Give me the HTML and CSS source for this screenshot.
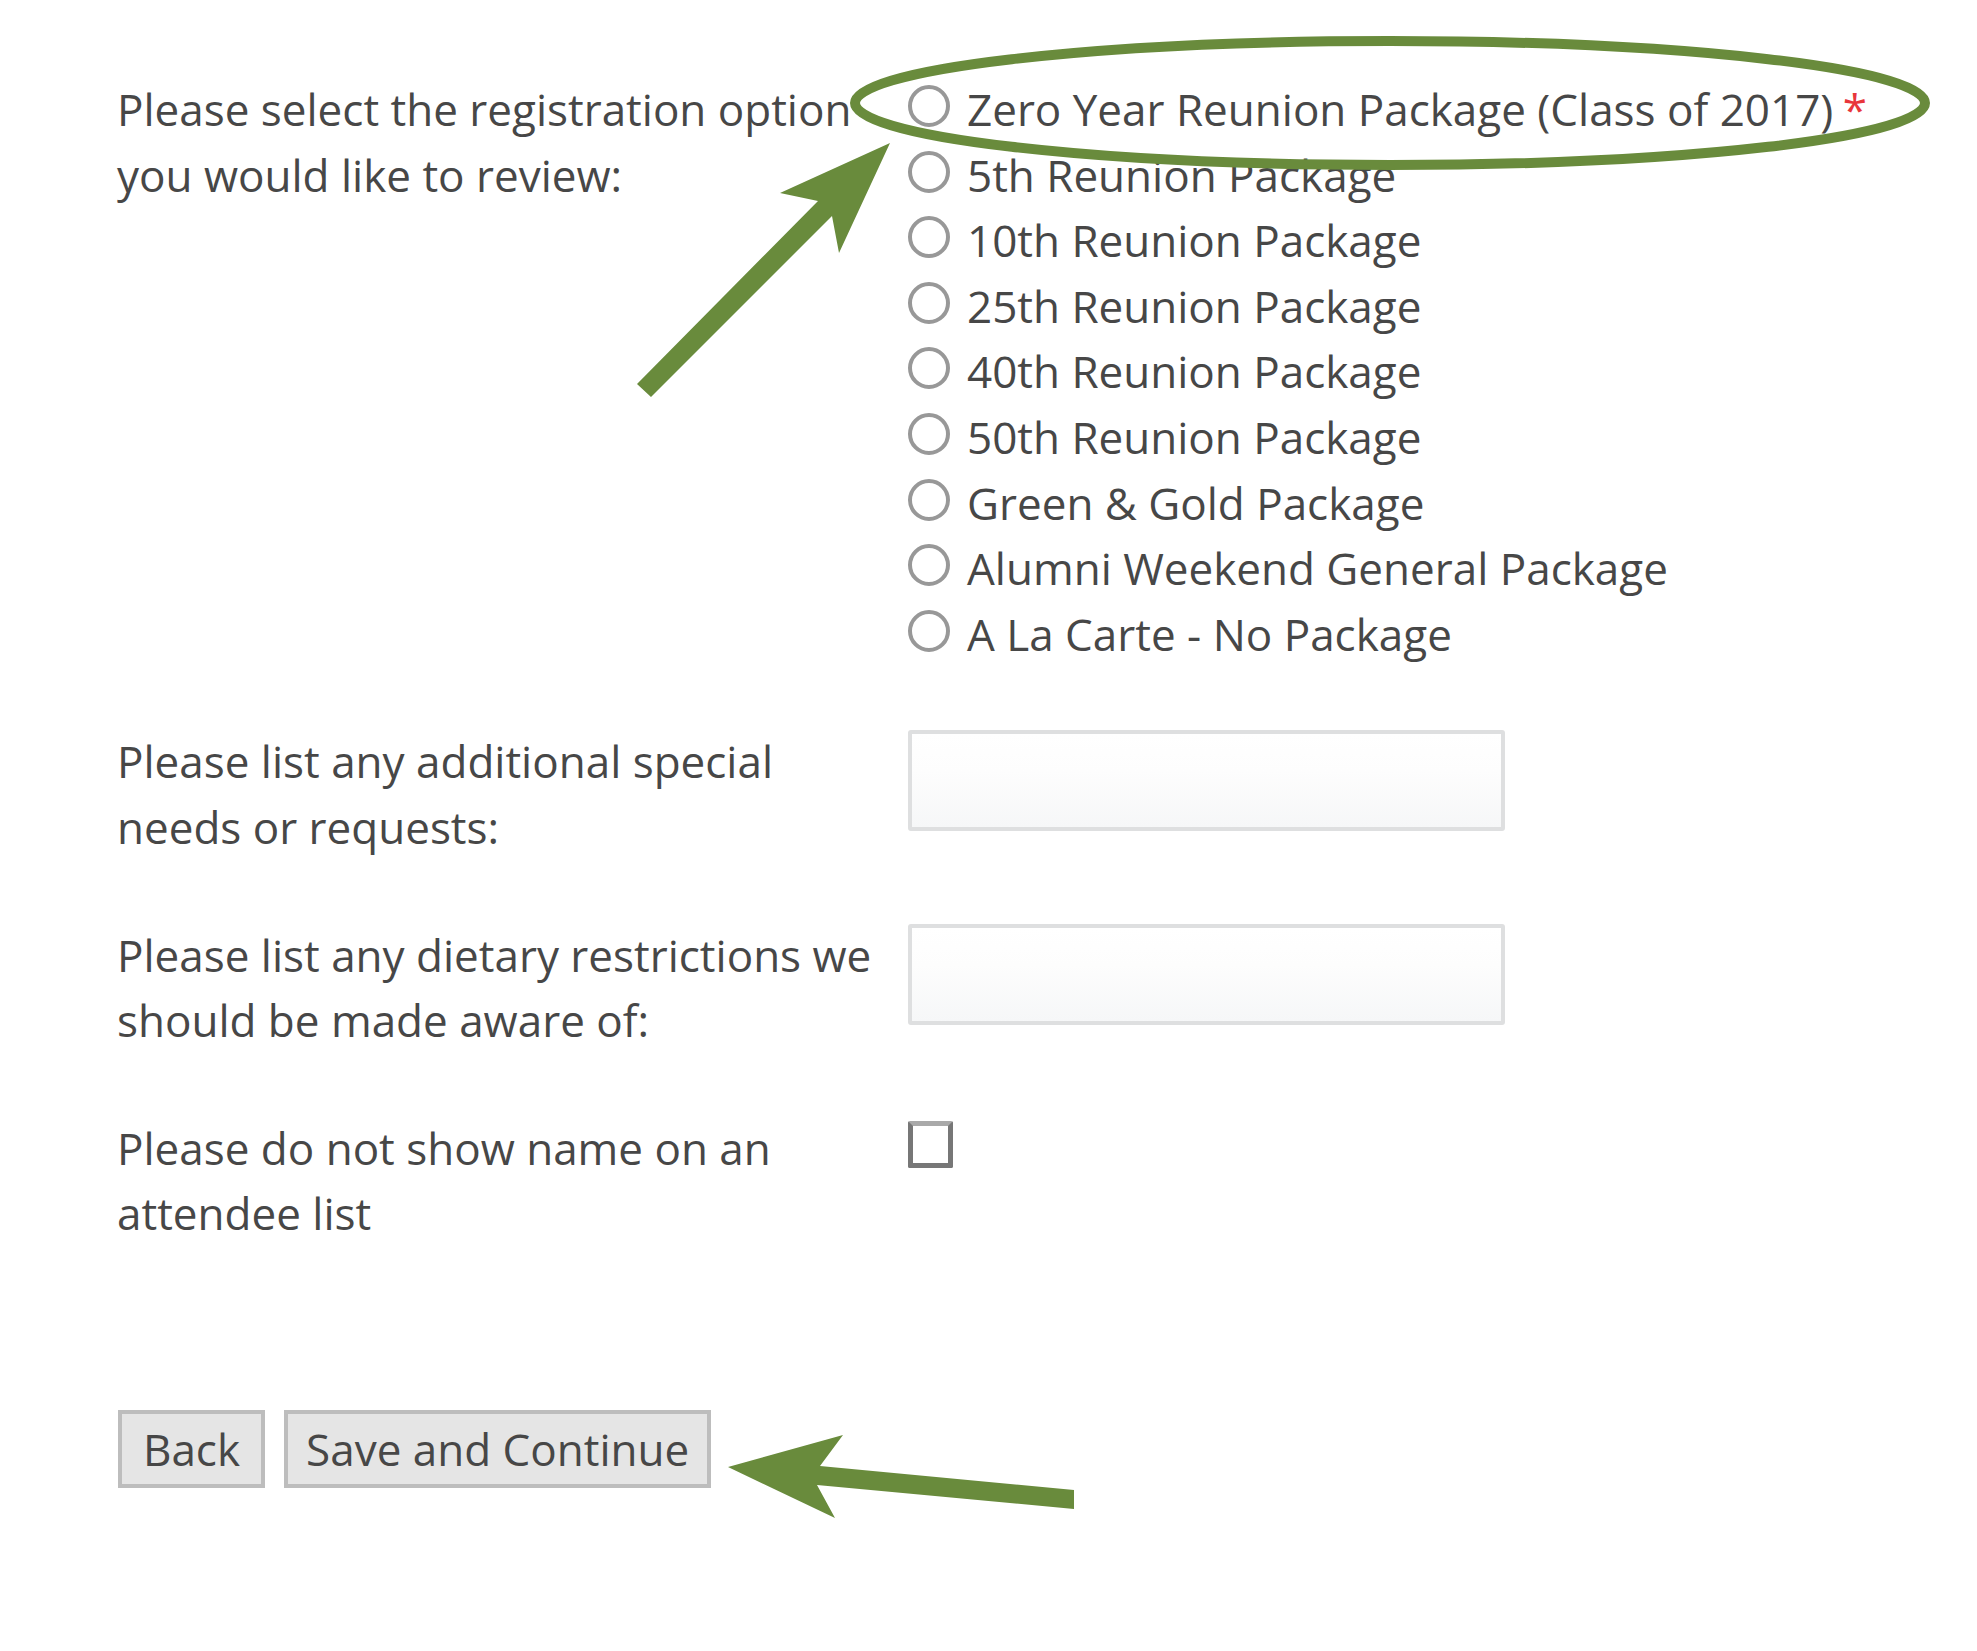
FILE: index.html
```html
<!DOCTYPE html>
<html lang="en">
<head>
<meta charset="utf-8">
<title>Registration Options</title>
<link rel="stylesheet" href="styles.css">
</head>
<body>
<div class="page">
  <form class="form">
    <div class="row">
      <div class="label">Please select the registration option you would like to review:</div>
      <div class="field">
        <ul class="options">
          <li><input type="radio" name="pkg" class="radio"><span class="opt-text">Zero Year Reunion Package (Class of 2017) <span class="req">*</span></span></li>
          <li><input type="radio" name="pkg" class="radio"><span class="opt-text">5th Reunion Package</span></li>
          <li><input type="radio" name="pkg" class="radio"><span class="opt-text">10th Reunion Package</span></li>
          <li><input type="radio" name="pkg" class="radio"><span class="opt-text">25th Reunion Package</span></li>
          <li><input type="radio" name="pkg" class="radio"><span class="opt-text">40th Reunion Package</span></li>
          <li><input type="radio" name="pkg" class="radio"><span class="opt-text">50th Reunion Package</span></li>
          <li><input type="radio" name="pkg" class="radio"><span class="opt-text">Green &amp; Gold Package</span></li>
          <li><input type="radio" name="pkg" class="radio"><span class="opt-text">Alumni Weekend General Package</span></li>
          <li><input type="radio" name="pkg" class="radio"><span class="opt-text">A La Carte - No Package</span></li>
        </ul>
      </div>
    </div>
    <div class="row">
      <div class="label">Please list any additional special needs or requests:</div>
      <div class="field"><input type="text" class="text-input"></div>
    </div>
    <div class="row">
      <div class="label">Please list any dietary restrictions we should be made aware of:</div>
      <div class="field"><input type="text" class="text-input"></div>
    </div>
    <div class="row">
      <div class="label">Please do not show name on an attendee list</div>
      <div class="field"><input type="checkbox" class="checkbox"></div>
    </div>
    <div class="actions">
      <button type="button" class="btn btn-back">Back</button>
      <button type="button" class="btn btn-save">Save and Continue</button>
    </div>
  </form>
  <svg class="annotations" width="1977" height="1651" viewBox="0 0 1977 1651" xmlns="http://www.w3.org/2000/svg">
    <ellipse cx="1390" cy="103" rx="535" ry="62" fill="none" stroke="#698b3c" stroke-width="10"/>
    <polygon fill="#698b3c" points="890,143 780,193 818,201 637,384 651,397 832,216 839,253"/>
    <polygon fill="#698b3c" points="728,1467 843,1435 820,1466 1074,1490 1074,1509 817,1485 835,1518"/>
  </svg>
</div>
</body>
</html>
```
FILE: styles.css
```css
html, body {
  margin: 0;
  padding: 0;
  background: #ffffff;
}

body {
  font-family: "Open Sans", "DejaVu Sans", sans-serif;
  font-size: 44px;
  line-height: 65.6px;
  color: #474747;
}

.page {
  position: relative;
  width: 1977px;
  height: 1651px;
  overflow: hidden;
}

.form {
  padding: 77px 0 0 117px;
}

.row {
  display: grid;
  grid-template-columns: 791px 1fr;
  align-items: start;
}

.row + .row {
  margin-top: 62px;
}

.label {
  width: 770px;
}

.options {
  list-style: none;
  margin: 0;
  padding: 0;
}

.options li {
  display: flex;
  align-items: flex-start;
  height: 65.6px;
}

.radio {
  appearance: none;
  -webkit-appearance: none;
  box-sizing: border-box;
  width: 42px;
  height: 42px;
  margin: 8px 17px 0 0;
  border: 4px solid #989898;
  border-radius: 50%;
  background: #ffffff;
  flex: none;
}

.opt-text {
  white-space: nowrap;
}

.req {
  color: #e8363b;
  margin-left: -2px;
}

.text-input {
  display: block;
  box-sizing: border-box;
  width: 597px;
  height: 101px;
  margin: 1px 0 0 0;
  border: 4px solid #dedfe0;
  border-radius: 3px;
  background: linear-gradient(to bottom, #ffffff 0%, #fdfdfd 40%, #f6f7f8 100%);
  font: inherit;
}

.checkbox {
  appearance: none;
  -webkit-appearance: none;
  display: block;
  box-sizing: border-box;
  width: 45px;
  height: 47px;
  margin: 5px 0 0 0;
  border: 5px solid #777777;
  border-top-color: #a9a9a9;
  border-radius: 2px;
  background: #ffffff;
}

.actions {
  display: flex;
  gap: 19px;
  margin-top: 163px;
  margin-left: 1px;
}

.btn {
  box-sizing: border-box;
  height: 78px;
  padding: 0 21px;
  border: 4px solid #bdbdbd;
  border-radius: 0;
  background: #e5e5e5;
  color: #474747;
  font-family: "Open Sans", "DejaVu Sans", sans-serif;
  font-size: 44px;
  line-height: 1;
}

.btn-back {
  padding: 0 21px;
}

.btn-save {
  padding: 0 18px;
}

.annotations {
  position: absolute;
  top: 0;
  left: 0;
  pointer-events: none;
}
```
